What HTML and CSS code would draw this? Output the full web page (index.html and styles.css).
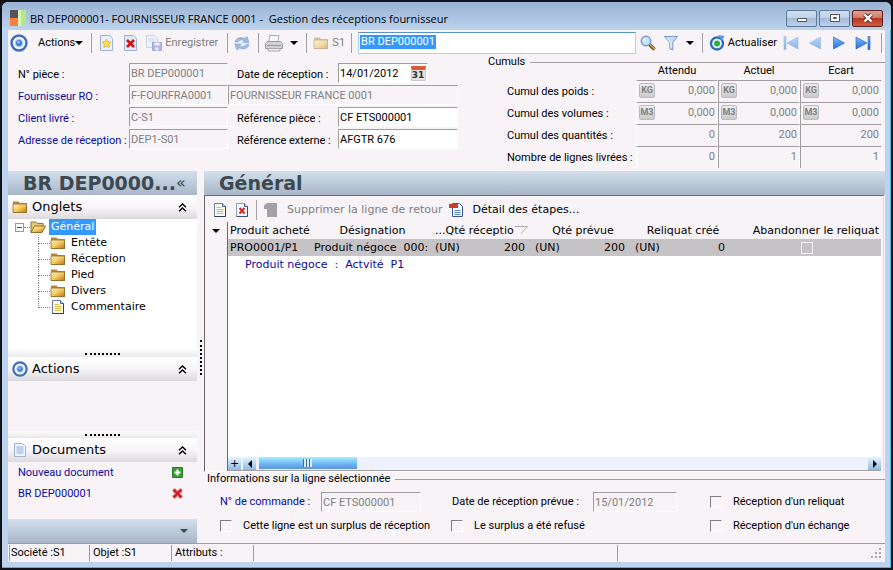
FILE: index.html
```html
<!DOCTYPE html>
<html lang="fr">
  <head>
    <meta charset="UTF-8" />
    <meta name="viewport" content="width=device-width, initial-scale=1.0" />
    <title>Gestion des réceptions fournisseur</title>
    <link rel="stylesheet" href="styles.css">
  </head>
  <body>
    <!-- Shared icons -->
    <svg class="defs" aria-hidden="true">
      <defs>
        <linearGradient id="gFolder" x1="0" y1="0" x2="1" y2="1">
          <stop offset="0" stop-color="#fff3c4" />
          <stop offset="0.5" stop-color="#f5c95c" />
          <stop offset="1" stop-color="#b87a14" />
        </linearGradient>
        <linearGradient id="gBlue" x1="0" y1="0" x2="0" y2="1">
          <stop offset="0" stop-color="#7cc0fa" />
          <stop offset="1" stop-color="#1a6fe0" />
        </linearGradient>
        <symbol id="target" viewBox="0 0 16 16">
          <circle cx="8" cy="8" r="6.6" fill="#f4f8fd" stroke="#3f6fb5" stroke-width="2.2" />
          <circle cx="8" cy="8" r="3.2" fill="#3d7fd6" stroke="#a9c8ee" />
          <circle cx="7.5" cy="7.3" r="1.2" fill="#8cc4ff" />
        </symbol>
        <symbol id="folder" viewBox="0 0 16 16">
          <path d="M1 4V2.5h5.5L8 4h7v10H1z" fill="#b98a3c" />
          <path d="M1 5h13.5v8.5H1z" fill="url(#gFolder)" stroke="#8f6a28" stroke-width="0.8" />
        </symbol>
        <symbol id="folder-open" viewBox="0 0 16 16">
          <path d="M1 13.5V3h5l1.5 1.5H13V7" fill="#e8c878" stroke="#8a7440" />
          <path d="M1 13.5L4.5 7H15.6L12 13.5z" fill="url(#gFolder)" stroke="#8a6420" stroke-width="0.9" />
        </symbol>
        <symbol id="page" viewBox="0 0 16 16">
          <path d="M2.5 1.5h8l3 3v10h-11z" fill="#fffef0" stroke="#6b7a9c" />
          <path d="M10.5 1.5v3h3" fill="#c4d4ee" stroke="#4a5f8c" />
          <path d="M4.5 5.5h5M4.5 7.5h7M4.5 9.5h7M4.5 11.5h7" stroke="#d8bc50" />
          <path d="M13.5 4.5v10h-11" fill="none" stroke="#2c3f66" />
        </symbol>
        <symbol id="page-x" viewBox="0 0 16 16">
          <path d="M2.5 1.5h8l3 3v10h-11z" fill="#f4f7fd" stroke="#8a9cc0" />
          <path d="M10.5 1.5v3h3" fill="#c4d4ee" stroke="#4a5f8c" />
          <path d="M5.5 6l5 5.5M10.5 6l-5 5.5" stroke="#d8241c" stroke-width="2" />
          <path d="M13.5 4.5v10h-11" fill="none" stroke="#3a4d7c" />
        </symbol>
        <symbol id="chevrons" viewBox="0 0 9 9">
          <path d="M1 4.3L4.5 1 8 4.3M1 8.3L4.5 5 8 8.3" fill="none" stroke="#000" stroke-width="1.4" />
        </symbol>
      </defs>
    </svg>

    <div class="window">
      <header class="titlebar">
        <svg class="logo" viewBox="0 0 16 16">
          <path d="M0 0h8v8H0z" fill="#555" />
          <path d="M0 8h8v8H0z" fill="#f9803c" />
          <path d="M8 0h8v16H8z" fill="#b8e68c" />
          <path d="M8 0h3v16H8z" fill="#d8f4b8" />
        </svg>
        <h1>BR DEP000001- FOURNISSEUR FRANCE 0001 - &nbsp;Gestion des réceptions fournisseur</h1>
        <button class="win-btn" aria-label="Réduire">
          <svg viewBox="0 0 14 12"><path d="M2.5 6.5h9v3h-9z" fill="#fff" stroke="#555" /></svg>
        </button>
        <button class="win-btn" aria-label="Agrandir">
          <svg viewBox="0 0 14 12"><path d="M2.5 2.5h9v7h-9z" fill="#fff" stroke="#555" /><path d="M5.5 5.5h3v1h-3z" fill="#fff" stroke="#555" /></svg>
        </button>
        <button class="win-btn close" aria-label="Fermer">
          <svg viewBox="0 0 14 12"><path d="M3.5 2.5l7 7M10.5 2.5l-7 7" stroke="#5a2a2a" stroke-width="4" /><path d="M3.5 2.5l7 7M10.5 2.5l-7 7" stroke="#fff" stroke-width="2.4" /></svg>
        </button>
      </header>

      <div class="client">
        <nav class="toolbar">
          <button class="tool" aria-label="Menu"><svg class="i18"><use href="#target" /></svg></button>
          <button class="tool menu">Actions<i class="caret"></i></button>
          <span class="sep"></span>
          <button class="tool doc-tool" aria-label="Nouveau">
            <svg class="i16" viewBox="0 0 16 16">
              <path d="M1.5.5h9l3 3v12h-12z" fill="#eaf1fb" stroke="#9fb2d0" />
              <path d="M7.5 4l1.4 2.8 3.1.4-2.2 2.2.5 3.1-2.8-1.5-2.8 1.5.5-3.1L3 7.2l3.1-.4z" fill="#ffe14a" stroke="#d4b23c" stroke-width="0.8" />
            </svg>
          </button>
          <button class="tool doc-tool" aria-label="Supprimer">
            <svg class="i16" viewBox="0 0 16 16">
              <path d="M1.5.5h9l3 3v12h-12z" fill="#dfe8f6" stroke="#9fb2d0" />
              <path d="M4 5l7 7M11 5l-7 7" stroke="#d01414" stroke-width="2.6" />
            </svg>
          </button>
          <button class="tool save" disabled>
            <svg class="i16" viewBox="0 0 16 16">
              <path d="M.5.5h8l3 3v9H.5z" fill="#eef3fb" stroke="#c8d2e6" />
              <path d="M2.5 4h6M2.5 6h6" stroke="#c8d4e8" />
              <path d="M6.5 7.5h9v8h-9z" fill="#b4b8e4" stroke="#a0a6d4" />
              <path d="M8.5 7.5h5v3h-5zM9.5 12.5h3v3h-3z" fill="#eef0fb" />
            </svg>Enregistrer
          </button>
          <span class="sep"></span>
          <button class="tool sync" aria-label="Rafraîchir">
            <svg class="i16" viewBox="0 0 16 16" fill="#9cbce6" stroke="#7c9fd0" stroke-width="0.6">
              <path d="M1 7C2 3 6 1.5 10.5 3.5L13 1.5 15 7.5H8.5L10.5 5.6C8 4.4 5 5 4 7z" />
              <path d="M15 9.5c-1 4-5 5.5-9.5 3.5L3 15 .8 9h6.5l-2 1.9c2.5 1.2 5.5.6 6.7-1.4z" />
            </svg>
          </button>
          <span class="sep"></span>
          <button class="tool printer" aria-label="Imprimer">
            <svg class="i18" viewBox="0 0 18 18">
              <path d="M5 1.5h9l-1.5 7h-9z" fill="#fafafa" stroke="#aaa" />
              <path d="M.5 9.5l2-2h13l2 2v5H.5z" fill="#d2d2d2" stroke="#9a9a9a" />
              <path d="M3 14.5h12v2.5H3z" fill="#ececec" stroke="#aaa" />
              <path d="M2 11.5h14" stroke="#9a9a9a" />
            </svg>
            <i class="caret"></i>
          </button>
          <span class="sep"></span>
          <button class="tool site" disabled><svg class="i16 faded"><use href="#folder" /></svg>S1</button>
          <span class="sep"></span>
          <div class="search"><input type="text" aria-label="Recherche" value="BR DEP000001" /><mark>BR DEP000001</mark></div>
          <button class="tool" aria-label="Chercher">
            <svg class="i16" viewBox="0 0 16 16">
              <path d="M9.5 9.5l5 5" stroke="#6b5230" stroke-width="3.4" />
              <path d="M10 9.5l4.5 4.5" stroke="#e0a63c" stroke-width="1.4" />
              <circle cx="6" cy="6" r="4.7" fill="#c4e2fb" stroke="#6f96cc" stroke-width="1.4" />
              <circle cx="4.8" cy="4.8" r="1.5" fill="#fff" />
            </svg>
          </button>
          <button class="tool filter" aria-label="Filtrer">
            <svg class="i16" viewBox="0 0 16 16"><path d="M1.5 1.5h13L9.8 7.5v7.5l-3-1.500v-6z" fill="#c4dcf8" stroke="#7898c8" /><path d="M4 3l4 4.5v5" fill="none" stroke="#f4faff" /></svg>
            <i class="caret"></i>
          </button>
          <span class="sep"></span>
          <button class="tool refresh">
            <svg class="i16" viewBox="0 0 16 16">
              <circle cx="8" cy="8.5" r="6" fill="#f2f8ff" stroke="#2f6cb8" stroke-width="2.4" />
              <path d="M9 0l6.5 1-3 5z" fill="#5a9ae0" />
              <circle cx="8" cy="8.5" r="3" fill="#2fae3a" />
            </svg>Actualiser
          </button>
          <div class="pager">
            <button class="tool faded" aria-label="Premier"><svg class="i16" viewBox="0 0 16 16"><path d="M1 1.500h2v13H1zM15 2v12L4 8z" fill="url(#gBlue)" stroke="#3878c8" stroke-width="0.6" /></svg></button>
            <button class="tool faded" aria-label="Précédent"><svg class="i16" viewBox="0 0 16 16"><path d="M13.5 2v12L2.5 8z" fill="url(#gBlue)" stroke="#3878c8" stroke-width="0.6" /></svg></button>
            <button class="tool" aria-label="Suivant"><svg class="i16" viewBox="0 0 16 16"><path d="M2.5 2v12l11-6z" fill="url(#gBlue)" stroke="#1c5cb0" stroke-width="0.6" /></svg></button>
            <button class="tool" aria-label="Dernier"><svg class="i16" viewBox="0 0 16 16"><path d="M1 2v12l11-6zM13 1.5h2v13h-2z" fill="url(#gBlue)" stroke="#1c5cb0" stroke-width="0.6" /></svg></button>
          </div>
          <span class="sep"></span>
        </nav>

        <div class="head">
          <form class="fields">
            <label for="piece">N° pièce :</label>
            <input id="piece" type="text" value="BR DEP000001" disabled />
            <label class="second" for="date">Date de réception :</label>
            <div class="date-box">
              <input id="date" type="text" value="14/01/2012" />
              <button type="button" class="calendar"><span>31</span></button>
            </div>

            <label class="link" for="supplier">Fournisseur RO :</label>
            <input id="supplier" type="text" value="F-FOURFRA0001" disabled />
            <input class="wide" type="text" aria-label="Nom du fournisseur" value="FOURNISSEUR FRANCE 0001" disabled />

            <label class="link" for="client">Client livré :</label>
            <input id="client" type="text" value="C-S1" disabled />
            <label class="second" for="ref">Référence pièce :</label>
            <input id="ref" type="text" value="CF ETS000001" />

            <label class="link" for="address">Adresse de réception :</label>
            <input id="address" type="text" value="DEP1-S01" disabled />
            <label class="second" for="ext">Référence externe :</label>
            <input id="ext" type="text" value="AFGTR 676" />
          </form>

          <fieldset class="group totals">
            <legend>Cumuls</legend>
            <table>
              <thead>
                <tr><td></td><th>Attendu</th><th>Actuel</th><th>Ecart</th></tr>
              </thead>
              <tbody>
                <tr>
                  <th>Cumul des poids :</th>
                  <td><div class="amount"><button>KG</button>0,000</div></td>
                  <td><div class="amount"><button>KG</button>0,000</div></td>
                  <td><div class="amount"><button>KG</button>0,000</div></td>
                </tr>
                <tr>
                  <th>Cumul des volumes :</th>
                  <td><div class="amount"><button>M3</button>0,000</div></td>
                  <td><div class="amount"><button>M3</button>0,000</div></td>
                  <td><div class="amount"><button>M3</button>0,000</div></td>
                </tr>
                <tr><th>Cumul des quantités :</th><td>0</td><td>200</td><td>200</td></tr>
                <tr><th>Nombre de lignes livrées :</th><td>0</td><td>1</td><td>1</td></tr>
              </tbody>
            </table>
          </fieldset>
        </div>

        <div class="body">
          <aside class="sidebar">
            <div class="banner"><h2>BR DEP0000...</h2><button class="collapse">«</button></div>

            <div class="panel-title">
              <svg class="i16"><use href="#folder" /></svg><h3>Onglets</h3>
              <button aria-label="Replier"><svg><use href="#chevrons" /></svg></button>
            </div>
            <div class="tree">
              <div class="root">
                <span class="toggle"></span><i class="dots"></i>
                <svg class="i16"><use href="#folder-open" /></svg><span class="selected">Général</span>
              </div>
              <ul>
                <li><svg class="i16"><use href="#folder" /></svg>Entête</li>
                <li><svg class="i16"><use href="#folder" /></svg>Réception</li>
                <li><svg class="i16"><use href="#folder" /></svg>Pied</li>
                <li><svg class="i16"><use href="#folder" /></svg>Divers</li>
                <li><svg class="i16"><use href="#page" /></svg>Commentaire</li>
              </ul>
            </div>
            <div class="grip"></div>

            <div class="panel-title">
              <svg class="i16"><use href="#target" /></svg><h3>Actions</h3>
              <button aria-label="Replier"><svg><use href="#chevrons" /></svg></button>
            </div>
            <div class="actions"></div>
            <div class="grip"></div>

            <div class="panel-title">
              <svg class="i16" viewBox="0 0 16 16">
                <path d="M2.5 1.5h8l3 3v10h-11z" fill="#edf3fc" stroke="#a4b4d0" />
                <path d="M4.5 5h7M4.5 7h7M4.5 9h7M4.5 11h7" stroke="#8fb0e0" />
              </svg><h3>Documents</h3>
              <button aria-label="Replier"><svg><use href="#chevrons" /></svg></button>
            </div>
            <ul class="documents">
              <li><a href="#">Nouveau document</a>
                <svg viewBox="0 0 11 11"><path d="M.5.5h10v10H.5z" fill="#3f9b35" stroke="#2c7a26" /><path d="M5.5 2.5v6M2.5 5.5h6" stroke="#fff" stroke-width="2" /></svg></li>
              <li><a href="#">BR DEP000001</a>
                <svg viewBox="0 0 11 11"><path d="M1.5 1.5l8 8M9.5 1.5l-8 8" stroke="#e08080" stroke-width="4" /><path d="M1.5 1.5l8 8M9.5 1.5l-8 8" stroke="#cc1c1c" stroke-width="2" /></svg></li>
            </ul>
            <div class="banner foot"><i class="caret"></i></div>
          </aside>

          <div class="splitter"></div>

          <main>
            <div class="banner"><h2>Général</h2></div>
            <div class="sheet">
              <div class="sheet-tools">
                <button class="tool" aria-label="Nouvelle ligne"><svg class="i16"><use href="#page" /></svg></button>
                <button class="tool" aria-label="Supprimer la ligne"><svg class="i16"><use href="#page-x" /></svg></button>
                <span class="sep"></span>
                <button class="tool" disabled>
                  <svg class="i16" viewBox="0 0 16 16"><path d="M1 3.5L4 1h10v14H4V7H1z" fill="#a3a1a4" /></svg>Supprimer la ligne de retour
                </button>
                <button class="tool">
                  <svg class="i16" viewBox="0 0 16 16">
                    <path d="M4.5 1.5h7l3 3v10h-10z" fill="#f4f8ff" stroke="#39588f" />
                    <path d="M6.5 8.5h6M6.5 10.5h6M6.5 12.5h6" stroke="#5a86c8" />
                    <path d="M1 2h9v4H1z" fill="#c8402c" />
                  </svg>Détail des étapes...
                </button>
              </div>
              <div class="grid-area">
                <div class="gutter"><i class="caret"></i></div>
                <div class="grid">
                  <table class="lines">
                    <colgroup>
                      <col class="c-prod"><col class="c-name"><col class="c-qty"><col class="c-qty"><col class="c-qty"><col>
                    </colgroup>
                    <thead>
                      <tr>
                        <th class="left">Produit acheté</th>
                        <th>Désignation</th>
                        <th class="left">...Qté réceptio<svg class="sort" viewBox="0 0 14 8"><path d="M.5.5h13L7 7.5" fill="none" stroke="#aaa" /></svg></th>
                        <th>Qté prévue</th>
                        <th>Reliquat créé</th>
                        <th class="right">Abandonner le reliquat</th>
                      </tr>
                    </thead>
                    <tbody>
                      <tr class="current">
                        <td>PRO0001/P1</td>
                        <td>Produit négoce &nbsp;000:</td>
                        <td><div class="qty"><span>(UN)</span><span>200</span></div></td>
                        <td><div class="qty"><span>(UN)</span><span>200</span></div></td>
                        <td><div class="qty"><span>(UN)</span><span>0</span></div></td>
                        <td class="center"><input type="checkbox" aria-label="Abandonner le reliquat" /></td>
                      </tr>
                      <tr class="detail"><td colspan="6">Produit négoce &nbsp;: &nbsp;Actvité &nbsp;P1</td></tr>
                    </tbody>
                  </table>
                  <div class="hscroll">
                    <button>+</button>
                    <button aria-label="Gauche"><i class="arrow-left"></i></button>
                    <div class="thumb"><i></i></div>
                    <button aria-label="Droite"><i class="arrow-right"></i></button>
                  </div>
                </div>
              </div>
            </div>

            <fieldset class="group info">
              <legend>Informations sur la ligne sélectionnée</legend>
              <div class="info-row">
                <label class="link w-order" for="order">N° de commande :</label>
                <input class="w-input" id="order" type="text" value="CF ETS000001" disabled />
                <label class="w-planned" for="planned">Date de réception prévue :</label>
                <input class="w-date" id="planned" type="text" value="15/01/2012" disabled />
                <label class="check last"><input type="checkbox" />Réception d'un reliquat</label>
              </div>
              <div class="info-row">
                <label class="check"><input type="checkbox" />Cette ligne est un surplus de réception</label>
                <label class="check middle"><input type="checkbox" />Le surplus a été refusé</label>
                <label class="check last"><input type="checkbox" />Réception d'un échange</label>
              </div>
            </fieldset>
          </main>
        </div>

        <footer class="status">
          <span class="first">Société :S1</span>
          <span>Objet :S1</span>
          <span>Attributs :</span>
          <span class="grow"></span>
          <span class="end"></span>
          <svg viewBox="0 0 11 11"><path d="M8 0h2v2H8zM4 4h2v2H4zM8 4h2v2H8zM0 8h2v2H0zM4 8h2v2H4zM8 8h2v2H8z" fill="#a8a4a8" /></svg>
        </footer>
      </div>
    </div>
  </body>
</html>
```
FILE: styles.css
```css
* {
  box-sizing: border-box;
}
html {
  background: #101418;
}
body {
  margin: 0;
  padding: 2px;
  height: 100vh;
  font: 11px/14px Roboto, "Liberation Sans", sans-serif;
  color: #000;
}
button,
input {
  font: inherit;
  color: inherit;
  margin: 0;
}
button {
  padding: 0;
  border: 0;
  background: none;
}
h1,
h2,
h3,
ul {
  margin: 0;
  padding: 0;
  list-style: none;
}
svg {
  flex: none;
  display: block;
}
.defs {
  position: absolute;
  width: 0;
  height: 0;
}
.i16 {
  width: 16px;
  height: 16px;
}
.i18 {
  width: 18px;
  height: 18px;
}
.faded {
  opacity: 0.5;
}
.caret {
  flex: none;
  border: 4px solid transparent;
  border-top-color: #000;
  border-bottom: 0;
}

/* Window frame */
.window {
  height: 100%;
  display: flex;
  flex-direction: column;
  padding: 0 6px 6px;
  background: #bcd2ee;
  border-radius: 6px 6px 0 0;
  box-shadow: inset -1px -1px #46b8d8;
}
.titlebar {
  flex: none;
  display: flex;
  align-items: center;
  gap: 2px;
  height: 28px;
  margin: 0 -6px;
  padding: 4px 8px 0;
  border-radius: 6px 6px 0 0;
  background: linear-gradient(#98b3d4, #bdd3ee);
}
.logo {
  width: 16px;
  height: 16px;
}
.titlebar h1 {
  flex: 1;
  padding: 2px 0 0 2px;
  font: 11px/14px "Open Sans", sans-serif;
}
.win-btn {
  display: flex;
  align-items: center;
  justify-content: center;
  width: 31px;
  height: 17px;
  border: 1px solid #5f7896;
  border-radius: 2px;
  background: linear-gradient(#cfdef0, #c0d2e8 50%, #a3bad6 50%, #bdd2ec);
}
.win-btn svg {
  width: 14px;
  height: 12px;
}
.win-btn.close {
  border-color: #5c2020;
  background: linear-gradient(#e0a090, #d07862 50%, #b83820 50%, #cc6040);
}
.client {
  flex: 1;
  min-height: 0;
  display: flex;
  flex-direction: column;
  background: #f7f3f7;
}

/* Main toolbar */
.toolbar {
  flex: none;
  display: flex;
  align-items: center;
  gap: 6px;
  height: 25px;
  padding: 0 3px 0 2px;
}
.tool {
  display: flex;
  align-items: center;
  gap: 3px;
}
.tool:disabled {
  color: #808080;
}
.menu {
  gap: 0;
  padding: 0 2px 0 4px;
}
.doc-tool {
  width: 18px;
  justify-content: center;
}
.save {
  padding-right: 3px;
}
.sync {
  padding-right: 2px;
}
.printer {
  gap: 7px;
  padding-right: 2px;
}
.filter {
  gap: 7px;
  padding: 0 2px 0 1px;
}
.pager {
  display: flex;
  gap: 8px;
  padding-right: 4px;
}
.sep {
  flex: none;
  width: 1px;
  height: 20px;
  background: #a0a0a0;
}
.search {
  flex: 1;
  position: relative;
}
.search input {
  display: block;
  width: 100%;
  height: 22px;
  padding: 0 2px 2px;
  border: 1px solid #aed0ea;
  border-top-color: #5794bf;
  background: #fff;
  outline: 0;
}
.search mark {
  position: absolute;
  left: 2px;
  top: 3px;
  padding: 0 1px;
  background: #3399ff;
  color: #fff;
  pointer-events: none;
}
.search + .tool {
  margin-left: -2px;
}

/* Header form */
.head {
  flex: none;
  display: flex;
  height: 116px;
}
.fields {
  flex: none;
  display: grid;
  grid-template-columns: 111px 99px 110px 120px;
  grid-auto-rows: 20px;
  row-gap: 2px;
  padding: 8px 30px 0 10px;
}
.fields label {
  padding-top: 5px;
}
.fields .second {
  padding-left: 9px;
}
.link,
label.link {
  color: #0a0a9c;
}
input[type="text"] {
  min-width: 0;
}
.fields input,
.info-row input[type="text"] {
  height: 20px;
  padding: 0 1px;
  border: 1px solid;
  border-color: #a09ca0 #fff #fff #a09ca0;
  background: #fff;
}
.fields input:disabled,
.info-row input:disabled {
  background: #f7f3f7;
  color: #808080;
}
.fields .wide {
  grid-column: 3 / 5;
}
.date-box {
  display: flex;
  width: 90px;
  border: 1px solid;
  border-color: #a09ca0 #fff #fff #a09ca0;
  background: #fff;
}
.fields .date-box input {
  flex: 1;
  height: 18px;
  border: 0;
}
.calendar {
  align-self: center;
  width: 15px;
  height: 15px;
  margin-right: 1px;
  border: 1px solid #c8c8c8;
  border-top: 4px solid #d8593c;
  background: #e4e4e4;
  font: bold 9px/10px "DejaVu Sans", sans-serif;
  color: #333;
}
.calendar span {
  display: block;
  margin-left: -1px;
}

/* Group boxes */
.group {
  min-width: 0;
  margin: 0;
  padding: 0;
  border: 0;
  border-top: 1px solid #a09ca0;
}
.group legend {
  padding: 0 5px 0 0;
}
.totals {
  flex: 1;
}
.totals table {
  width: 100%;
  table-layout: fixed;
  border-collapse: separate;
  border-spacing: 0;
  padding-right: 3px;
  margin-top: -7px;
}
.totals th {
  font-weight: normal;
}
.totals thead td {
  width: 148px;
}
.totals thead th {
  height: 18px;
}
.totals tbody th {
  padding: 2px 0 0 19px;
  text-align: left;
}
.totals tbody td {
  height: 22px;
  padding: 0 2px 2px;
  border-top: 1px solid #a09ca0;
  border-right: 1px solid #fff;
  border-left: 1px solid #a09ca0;
  color: #808080;
  text-align: right;
}
.totals tbody td:nth-child(2) {
  border-left-color: #fff;
}
.amount {
  display: flex;
  align-items: center;
  justify-content: space-between;
}
.amount button {
  width: 16px;
  height: 15px;
  border: 1px solid #bbb;
  border-radius: 2px;
  background: linear-gradient(#ececec, #cacaca);
  font-size: 9px;
  line-height: 13px;
  font-weight: bold;
}

/* Work area */
.body {
  flex: 1;
  min-height: 0;
  display: flex;
}
.banner {
  flex: none;
  display: flex;
  align-items: center;
  height: 24px;
  padding: 0 9px 0 15px;
  background: linear-gradient(#d2dfec, #a9b6c8);
  color: #3c4a50;
}
.banner h2 {
  font: bold 19px/24px "DejaVu Sans", sans-serif;
}
.sidebar {
  flex: none;
  width: 189px;
  display: flex;
  flex-direction: column;
}
.collapse {
  font: 16px/20px "DejaVu Sans", sans-serif;
}
.panel-title {
  flex: none;
  display: flex;
  align-items: center;
  height: 24px;
  padding: 0 10px 0 4px;
  background: linear-gradient(#fff, #f7f5f7 50%, #dcdadd);
}
.panel-title h3 {
  flex: 1;
  padding-left: 4px;
  font: 13px/20px "DejaVu Sans", sans-serif;
}
.panel-title button svg {
  width: 9px;
  height: 9px;
}
.tree {
  flex: 1;
  background: #fff;
  font: 11px/16px "DejaVu Sans", sans-serif;
}
.root {
  display: flex;
  align-items: center;
  height: 16px;
  padding-left: 7px;
}
.toggle {
  width: 9px;
  height: 9px;
  border: 1px solid #8a9cb4;
  background: linear-gradient(#3a4a9c, #3a4a9c) center / 5px 1px no-repeat #fff;
}
.dots {
  width: 6px;
  border-top: 1px dotted #808080;
}
.selected {
  margin-left: 3px;
  padding: 0 2px;
  background: #3399ff;
  color: #fff;
}
.tree ul {
  padding-left: 30px;
}
.tree li {
  position: relative;
  display: flex;
  height: 16px;
}
.tree li svg {
  margin-right: 5px;
}
.tree li::before {
  content: "";
  width: 11px;
  height: 8px;
  border-bottom: 1px dotted #808080;
  border-left: 1px dotted #808080;
}
.tree li:not(:last-child)::after {
  content: "";
  position: absolute;
  left: 0;
  top: 8px;
  height: 8px;
  border-left: 1px dotted #808080;
}
.grip {
  flex: none;
  display: flex;
  justify-content: center;
  align-items: center;
  height: 7px;
  background: linear-gradient(#fbfafb, #ebe9eb);
}
.grip::before {
  content: "";
  width: 35px;
  border-top: 2px dotted #000;
}
.actions {
  flex: none;
  height: 50px;
}
.documents {
  flex: none;
  height: 57px;
  padding-left: 10px;
}
.documents li {
  display: flex;
  align-items: center;
  justify-content: space-between;
  height: 21px;
  padding-right: 14px;
}
.documents a {
  color: #0a0a9c;
  text-decoration: none;
}
.documents svg {
  width: 11px;
  height: 11px;
}
.foot {
  justify-content: flex-end;
}
.foot .caret {
  border-top-color: #3c4a50;
}
.splitter {
  flex: none;
  display: flex;
  justify-content: center;
  align-items: center;
  width: 7px;
}
.splitter::before {
  content: "";
  height: 35px;
  border-left: 2px dotted #000;
}
main {
  flex: 1;
  min-width: 0;
  display: flex;
  flex-direction: column;
}

/* Lines sheet */
.sheet {
  flex: 1;
  min-height: 0;
  display: flex;
  flex-direction: column;
  margin-right: 1px;
  padding-right: 2px;
  border: 1px solid;
  border-color: #6c6a6c #dcdadc #fff #6c6a6c;
  font-family: "DejaVu Sans", sans-serif;
}
.sheet-tools {
  flex: none;
  display: flex;
  align-items: center;
  gap: 6px;
  height: 26px;
  padding: 2px 0 0 7px;
}
.sheet-tools .tool {
  gap: 8px;
}
.grid-area {
  flex: 1;
  min-height: 0;
  display: flex;
}
.gutter {
  flex: none;
  width: 23px;
  padding: 7px 0 0 7px;
  border-right: 1px solid #6c6a6c;
}
.gutter .caret {
  display: block;
  width: 8px;
}
.grid {
  flex: 1;
  min-width: 0;
  display: flex;
  flex-direction: column;
  justify-content: space-between;
  background: #fff;
}
.lines {
  width: 100%;
  table-layout: fixed;
  border-spacing: 0;
}
.c-prod {
  width: 84px;
}
.c-name {
  width: 121px;
}
.c-qty {
  width: 100px;
}
.lines th,
.lines td {
  height: 17px;
  padding: 0 2px;
  overflow: hidden;
  white-space: nowrap;
  font-weight: normal;
}
.lines th {
  background: #f7f3f7;
}
.lines .left {
  text-align: left;
}
.lines .right {
  text-align: right;
}
.lines .center {
  text-align: center;
}
.current td {
  background: #c6c3c6;
}
.lines .detail td {
  padding-left: 17px;
  color: #0a0a9c;
}
.sort {
  display: inline-block;
  width: 14px;
  height: 8px;
}
.qty {
  display: flex;
  justify-content: space-between;
  padding-right: 6px;
}
input[type="checkbox"] {
  appearance: none;
  flex: none;
  width: 12px;
  height: 12px;
  border: 1px solid;
  border-color: #807c80 #fff #fff #807c80;
}
.lines input[type="checkbox"] {
  display: block;
  margin: 0 auto;
  border-color: #f4f4f4;
}
.hscroll {
  display: flex;
  gap: 2px;
  height: 14px;
  background: #eef2fc;
  border-bottom: 1px solid #a09ca0;
}
.hscroll button {
  width: 13px;
  background: linear-gradient(#e4f6ff, #8fb8e4);
  display: flex;
  align-items: center;
  justify-content: center;
}
.hscroll button:last-child {
  margin-left: auto;
}
.arrow-left {
  border: 4px solid transparent;
  border-right-color: #000;
  border-left: 0;
}
.arrow-right {
  border: 4px solid transparent;
  border-left-color: #000;
  border-right: 0;
}
.thumb {
  display: flex;
  align-items: center;
  justify-content: center;
  width: 15%;
  height: 12px;
  margin-left: 1px;
  background: linear-gradient(#a4f0ff, #6cb4f4 60%, #5c94d8);
}
.thumb i {
  width: 9px;
  height: 8px;
  background: repeating-linear-gradient(90deg, #47698f 0 1px, #d4ecff 1px 3px);
}

/* Selected line details */
.info {
  flex: none;
  height: 71px;
}
.group.info {
  padding-top: 4px;
}
.group.info legend {
  padding-left: 3px;
}
.info-row {
  display: flex;
  align-items: center;
  height: 24px;
  padding-left: 16px;
}
.w-order {
  width: 101px;
}
.w-input {
  width: 100px;
}
.w-planned {
  width: 172px;
  padding-left: 31px;
}
.w-date {
  width: 84px;
}
.check {
  display: flex;
  align-items: center;
  gap: 11px;
  width: 231px;
}
.check.middle {
  width: 259px;
}
.check.last {
  flex: 1;
}
.info-row .w-date + .last {
  margin-left: 33px;
}

/* Status bar */
.status {
  flex: none;
  display: flex;
  align-items: center;
  height: 19px;
  padding: 1px 3px 1px 1px;
  border-top: 1px solid #a09ca0;
}
.status span {
  width: 82px;
  height: 16px;
  padding: 1px 3px 0;
  border-left: 1px solid #a09ca0;
}
.status .first {
  width: 80px;
  padding-left: 1px;
}
.status span.grow {
  flex: 58;
}
.status span.end {
  flex: 40;
}
.status svg {
  width: 11px;
  height: 11px;
}
```
